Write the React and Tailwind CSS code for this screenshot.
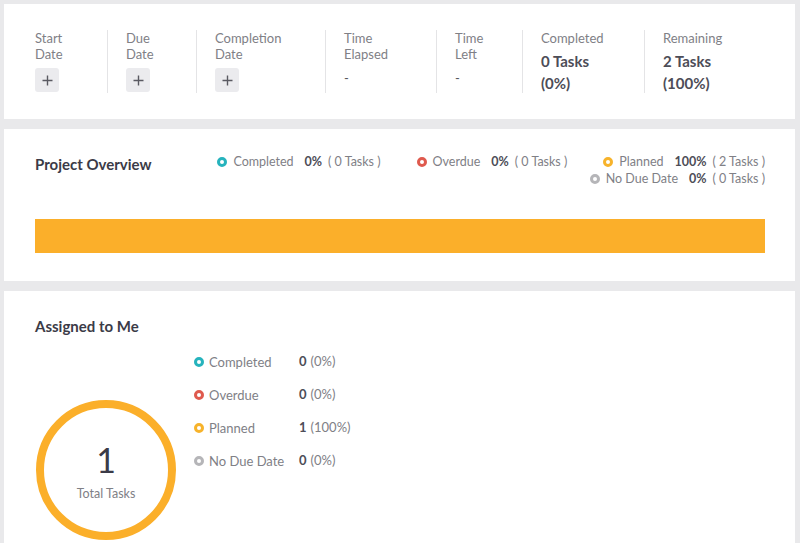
import React from 'react';

const font = { fontFamily: 'Lato, "Open Sans", sans-serif' };

function Dot({ color }) {
  return <span className={`inline-block w-[10px] h-[10px] rounded-full border-[3px] shrink-0 ${color}`} />;
}

function PlusButton() {
  return (
    <div className="mt-[6px] w-[24px] h-[24px] rounded-[3px] bg-[#ebebee] flex items-center justify-center">
      <svg width="11" height="11" viewBox="0 0 11 11">
        <path d="M5.5 0.5v10M0.5 5.5h10" stroke="#5a5a62" strokeWidth="1.4" fill="none" />
      </svg>
    </div>
  );
}

function App() {
  const legend = [
    { label: 'Completed', pct: '0%', tasks: '( 0 Tasks )', color: 'border-[#26b3bd]' },
    { label: 'Overdue', pct: '0%', tasks: '( 0 Tasks )', color: 'border-[#df5a4e]' },
    { label: 'Planned', pct: '100%', tasks: '( 2 Tasks )', color: 'border-[#f7b32b]' },
  ];

  const mine = [
    { label: 'Completed', n: '0', pct: '(0%)', color: 'border-[#26b3bd]' },
    { label: 'Overdue', n: '0', pct: '(0%)', color: 'border-[#df5a4e]' },
    { label: 'Planned', n: '1', pct: '(100%)', color: 'border-[#f7b32b]' },
    { label: 'No Due Date', n: '0', pct: '(0%)', color: 'border-[#b5b5b8]' },
  ];

  return (
    <div className="min-h-screen bg-[#e9e9eb] pl-1 pr-[5px] pt-1 flex flex-col gap-[10px]" style={font}>
      {/* dates and counts */}
      <div className="bg-white h-[115px] pl-[31px] pt-[26px] flex text-[13px] leading-[16px] text-[#808086]">
        <div className="w-[73px] h-[63px] border-r border-[#e4e4e6]">
          <div>Start</div>
          <div>Date</div>
          <PlusButton />
        </div>
        <div className="w-[89px] h-[63px] pl-[18px] border-r border-[#e4e4e6]">
          <div>Due</div>
          <div>Date</div>
          <PlusButton />
        </div>
        <div className="w-[129px] h-[63px] pl-[18px] border-r border-[#e4e4e6]">
          <div>Completion</div>
          <div>Date</div>
          <PlusButton />
        </div>
        <div className="w-[111px] h-[63px] pl-[18px] border-r border-[#e4e4e6]">
          <div>Time</div>
          <div>Elapsed</div>
          <div className="mt-[8px] text-[#55555d]">-</div>
        </div>
        <div className="w-[86px] h-[63px] pl-[18px] border-r border-[#e4e4e6]">
          <div>Time</div>
          <div>Left</div>
          <div className="mt-[8px] text-[#55555d]">-</div>
        </div>
        <div className="w-[122px] h-[63px] pl-[18px] border-r border-[#e4e4e6]">
          <div>Completed</div>
          <div className="mt-[4px] text-[15px] leading-[22px] font-bold text-[#4d4d57]">
            <div>0 Tasks</div>
            <div>(0%)</div>
          </div>
        </div>
        <div className="h-[63px] pl-[18px]">
          <div>Remaining</div>
          <div className="mt-[4px] text-[15px] leading-[22px] font-bold text-[#4d4d57]">
            <div>2 Tasks</div>
            <div>(100%)</div>
          </div>
        </div>
      </div>

      {/* project overview */}
      <div className="bg-white h-[152px] pl-[31px] pr-[30px] pt-[24px]">
        <div className="flex justify-between items-start">
          <div className="text-[15px] leading-[20px] font-bold text-[#3b3b47] mt-px">Project Overview</div>
          <div className="flex flex-col items-end text-[12.5px] leading-[17px] text-[#808086]">
            <div className="flex gap-[36px]">
              {legend.map((l) => (
                <div key={l.label} className="flex items-center">
                  <Dot color={l.color} />
                  <span className="ml-[6px]">{l.label}</span>
                  <span className="ml-[11px] font-bold text-[#4d4d57]">{l.pct}</span>
                  <span className="ml-[6px]">{l.tasks}</span>
                </div>
              ))}
            </div>
            <div className="flex items-center">
              <Dot color="border-[#b5b5b8]" />
              <span className="ml-[6px]">No Due Date</span>
              <span className="ml-[11px] font-bold text-[#4d4d57]">0%</span>
              <span className="ml-[6px]">( 0 Tasks )</span>
            </div>
          </div>
        </div>
        <div className="mt-[32px] h-[34px] bg-[#fbaf2a]" />
      </div>

      {/* assigned to me */}
      <div className="bg-white flex-1 pl-[31px] pt-[25px] pb-4">
        <div className="text-[15px] leading-[20px] font-bold text-[#3b3b47]">Assigned to Me</div>
        <div className="flex mt-[16px]">
          <div className="ml-px mt-[48px] w-[140px] h-[140px] rounded-full border-[8px] border-[#fbaf2a] flex flex-col items-center pt-[34px]">
            <div className="text-[34px] leading-[36px] text-[#3b3b47]">1</div>
            <div className="mt-[8px] text-[12.5px] leading-[16px] text-[#808086]">Total Tasks</div>
          </div>
          <div className="ml-[18px] flex flex-col gap-[13px] text-[13px] leading-[20px] text-[#808086]">
            {mine.map((m) => (
              <div key={m.label} className="flex items-center">
                <div className="w-[105px] flex items-center">
                  <Dot color={m.color} />
                  <span className="ml-[5px]">{m.label}</span>
                </div>
                <span className="font-bold text-[#4d4d57] -mt-[3px]">{m.n}</span>
                <span className="ml-[4px] -mt-[3px]">{m.pct}</span>
              </div>
            ))}
          </div>
        </div>
      </div>
    </div>
  );
}

export default App;
